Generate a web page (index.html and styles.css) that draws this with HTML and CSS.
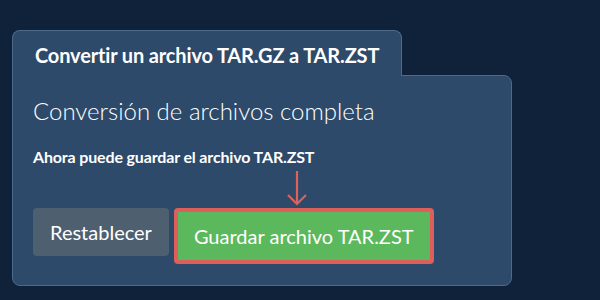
FILE: index.html
```html
<!DOCTYPE html>
<html lang="es">
<head>
    <meta charset="UTF-8">
    <title>Convertir TAR.GZ a TAR.ZST</title>
    <link rel="stylesheet" href="styles.css">
</head>
<body>

    <div class="converter">
        <div class="converter-tab">Convertir un archivo TAR.GZ a TAR.ZST</div>
        <div class="converter-panel">
            <h2 class="status-title">Conversión de archivos completa</h2>
            <p class="status-text">Ahora puede guardar el archivo TAR.ZST</p>
            <div class="actions">
                <button class="btn btn-reset">Restablecer</button>
                <button class="btn btn-save">Guardar archivo TAR.ZST</button>
                <svg class="hint-arrow" width="22" height="36" viewBox="0 0 22 36">
                    <path d="M11 1 V34 M2 25 L11 34 L20 25" fill="none" stroke="#e0605c" stroke-width="2.2"/>
                </svg>
            </div>
        </div>
    </div>

</body>
</html>
```

FILE: styles.css
```css
body {
    margin: 0;
    padding: 30px 0 0 12px;
    background-color: #0f2239;
    font-family: Lato, "Noto Sans", sans-serif;
    color: #fff;
}

.converter {
    width: 500px;
}

.converter-tab {
    display: inline-block;
    position: relative;
    z-index: 1;
    margin-bottom: -1px;
    padding: 14px 22px 11px 22px;
    background-color: #2d4a6a;
    border: 1px solid #4b6a8c;
    border-bottom: none;
    border-radius: 8px 8px 0 0;
    font-size: 20px;
    font-weight: bold;
    line-height: 20px;
    letter-spacing: -0.15px;
}

.converter-panel {
    background-color: #2d4a6a;
    border: 1px solid #4b6a8c;
    border-radius: 0 8px 8px 8px;
    padding: 20px 20px 21px 20px;
}

.status-title {
    margin: 0;
    font-size: 24px;
    font-weight: 300;
    line-height: 30px;
}

.status-text {
    margin: 21px 0 0 0;
    font-size: 16px;
    font-weight: bold;
    line-height: 20px;
    letter-spacing: -0.15px;
}

.actions {
    position: relative;
    display: flex;
    align-items: flex-start;
    gap: 5px;
    margin-top: 41px;
}

.btn {
    font-family: Lato, "Noto Sans", sans-serif;
    font-size: 20px;
    color: #fff;
    border: none;
    border-radius: 4px;
    height: 48px;
    padding: 0 17px;
    cursor: pointer;
}

.btn-reset {
    background-color: #4e5f70;
}

.btn-save {
    background-color: #5cb85c;
    border: 4px solid #dc5f5b;
    height: 56px;
    padding: 0 16px;
}

.hint-arrow {
    position: absolute;
    left: 253px;
    top: -38px;
}
```
